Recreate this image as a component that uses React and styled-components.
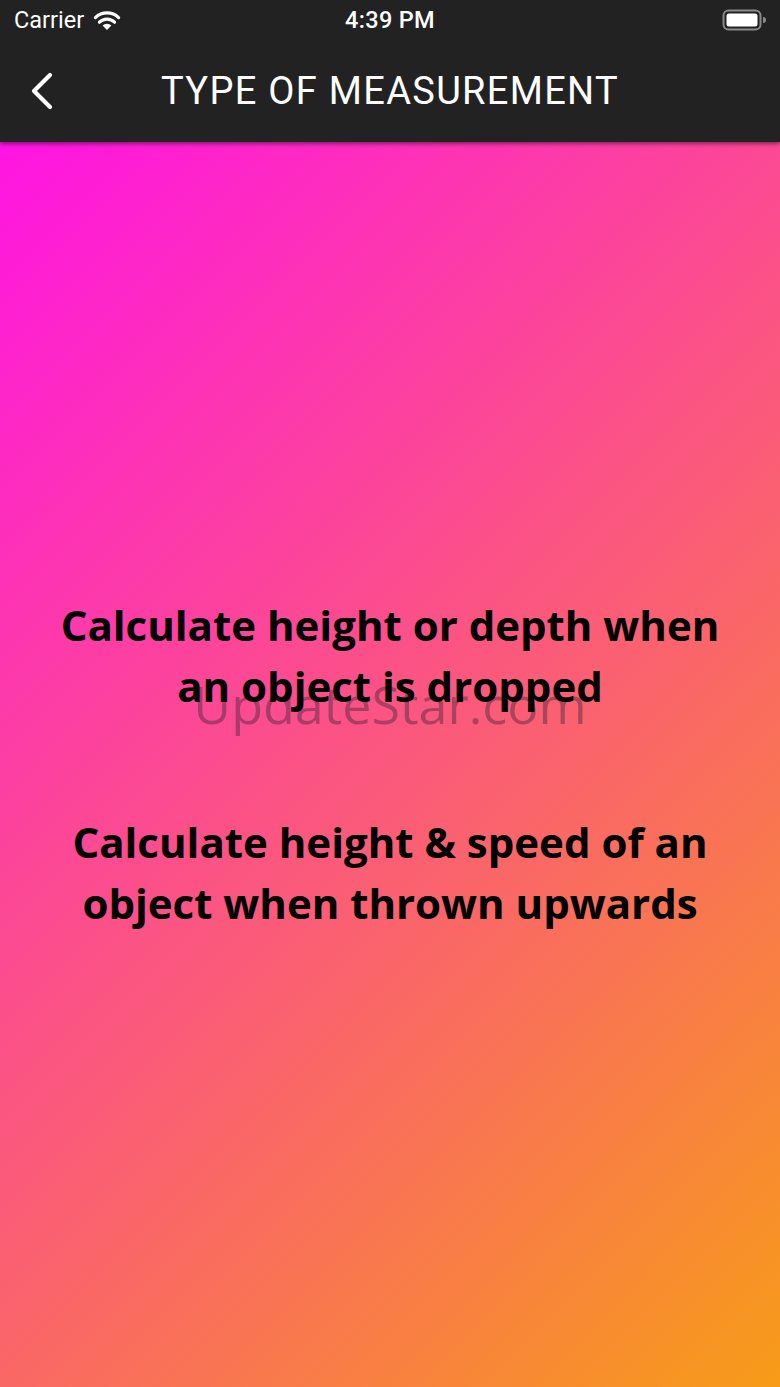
import React from 'react'
import styled, { createGlobalStyle } from 'styled-components'

const GlobalStyle = createGlobalStyle`
  html, body {
    margin: 0;
    padding: 0;
  }
  body {
    font-family: "Open Sans", "Liberation Sans", sans-serif;
    background: #222222;
  }
`

const Screen = styled.div`
  width: 780px;
  height: 1387px;
  display: flex;
  flex-direction: column;
  overflow: hidden;
`

const TopBar = styled.header`
  background: #222222;
  height: 142px;
  display: flex;
  flex-direction: column;
  box-shadow: 0 2px 4px rgba(0, 0, 0, 0.45);
  position: relative;
  z-index: 2;
`

const StatusBar = styled.div`
  height: 40px;
  display: grid;
  grid-template-columns: 1fr auto 1fr;
  align-items: center;
  padding: 0 14px;
  color: #ffffff;
  font-family: "Roboto", "Liberation Sans", sans-serif;
  font-size: 23.5px;
  .left {
    display: flex;
    align-items: center;
    gap: 9px;
  }
  .time {
    font-weight: 500;
    letter-spacing: 0.3px;
  }
  .right {
    display: flex;
    justify-content: flex-end;
  }
`

const NavRow = styled.div`
  flex: 1;
  display: flex;
  align-items: center;
  justify-content: center;
  position: relative;
`

const BackButton = styled.button`
  position: absolute;
  left: 26px;
  top: 50%;
  transform: translateY(-50%);
  background: none;
  border: 0;
  padding: 0;
  display: flex;
  cursor: pointer;
`

const Title = styled.h1`
  margin: 0;
  color: #ffffff;
  font-family: "Roboto", "Liberation Sans", sans-serif;
  font-weight: 400;
  font-size: 38px;
  letter-spacing: 1.3px;
`

const Body = styled.main`
  flex: 1;
  background: linear-gradient(135deg, #ff14e3 0%, #fb587d 50%, #f79c18 100%);
  display: flex;
  flex-direction: column;
  justify-content: center;
  align-items: center;
  gap: 95px;
  padding: 0 30px 2px;
  position: relative;
`

const Option = styled.button`
  background: none;
  border: 0;
  padding: 0;
  cursor: pointer;
  color: #000000;
  font-family: "Open Sans", "Liberation Sans", sans-serif;
  font-weight: 700;
  font-size: 42px;
  line-height: 61px;
  text-align: center;
  letter-spacing: 0;
  position: relative;
  z-index: 1;
  span {
    display: block;
  }
`

const Watermark = styled.div`
  position: absolute;
  left: 0;
  right: 0;
  top: 526px;
  text-align: center;
  font-family: "Open Sans", "Liberation Sans", sans-serif;
  font-size: 52px;
  font-weight: 400;
  color: rgba(70, 40, 60, 0.45);
  pointer-events: none;
  z-index: 0;
`

function Wifi() {
  return (
    <svg width="28" height="22" viewBox="0 0 28 22">
      <path d="M14 21 L9.6 16.4 A6.4 6.4 0 0 1 18.4 16.4 Z" fill="#fff" />
      <path d="M6.4 13.2 A10.8 10.8 0 0 1 21.6 13.2" stroke="#fff" strokeWidth="3.2" fill="none" strokeLinecap="round" />
      <path d="M2.4 8.6 A16.8 16.8 0 0 1 25.6 8.6" stroke="#fff" strokeWidth="3.2" fill="none" strokeLinecap="round" />
    </svg>
  )
}

function Battery() {
  return (
    <svg width="44" height="22" viewBox="0 0 44 22">
      <rect x="1.5" y="1.5" width="37" height="19" rx="5" fill="none" stroke="#8a8a8a" strokeWidth="2" />
      <rect x="4.5" y="4.5" width="31" height="13" rx="2.5" fill="#fff" />
      <path d="M41 8 A3 3 0 0 1 41 14 Z" fill="#8a8a8a" />
    </svg>
  )
}

function Chevron() {
  return (
    <svg width="30" height="40" viewBox="0 0 30 40">
      <path d="M24 4 L8 20 L24 36" stroke="#fff" strokeWidth="4.2" fill="none" strokeLinecap="round" strokeLinejoin="round" />
    </svg>
  )
}

export default function App() {
  return (
    <Screen>
      <GlobalStyle />
      <TopBar>
        <StatusBar>
          <div className="left">
            <span>Carrier</span>
            <Wifi />
          </div>
          <div className="time">4:39 PM</div>
          <div className="right">
            <Battery />
          </div>
        </StatusBar>
        <NavRow>
          <BackButton aria-label="Back">
            <Chevron />
          </BackButton>
          <Title>TYPE OF MEASUREMENT</Title>
        </NavRow>
      </TopBar>
      <Body>
        <Watermark>UpdateStar.com</Watermark>
        <Option>
          <span>Calculate height or depth when</span>
          <span>an object is dropped</span>
        </Option>
        <Option>
          <span>Calculate height &amp; speed of an</span>
          <span>object when thrown upwards</span>
        </Option>
      </Body>
    </Screen>
  )
}
